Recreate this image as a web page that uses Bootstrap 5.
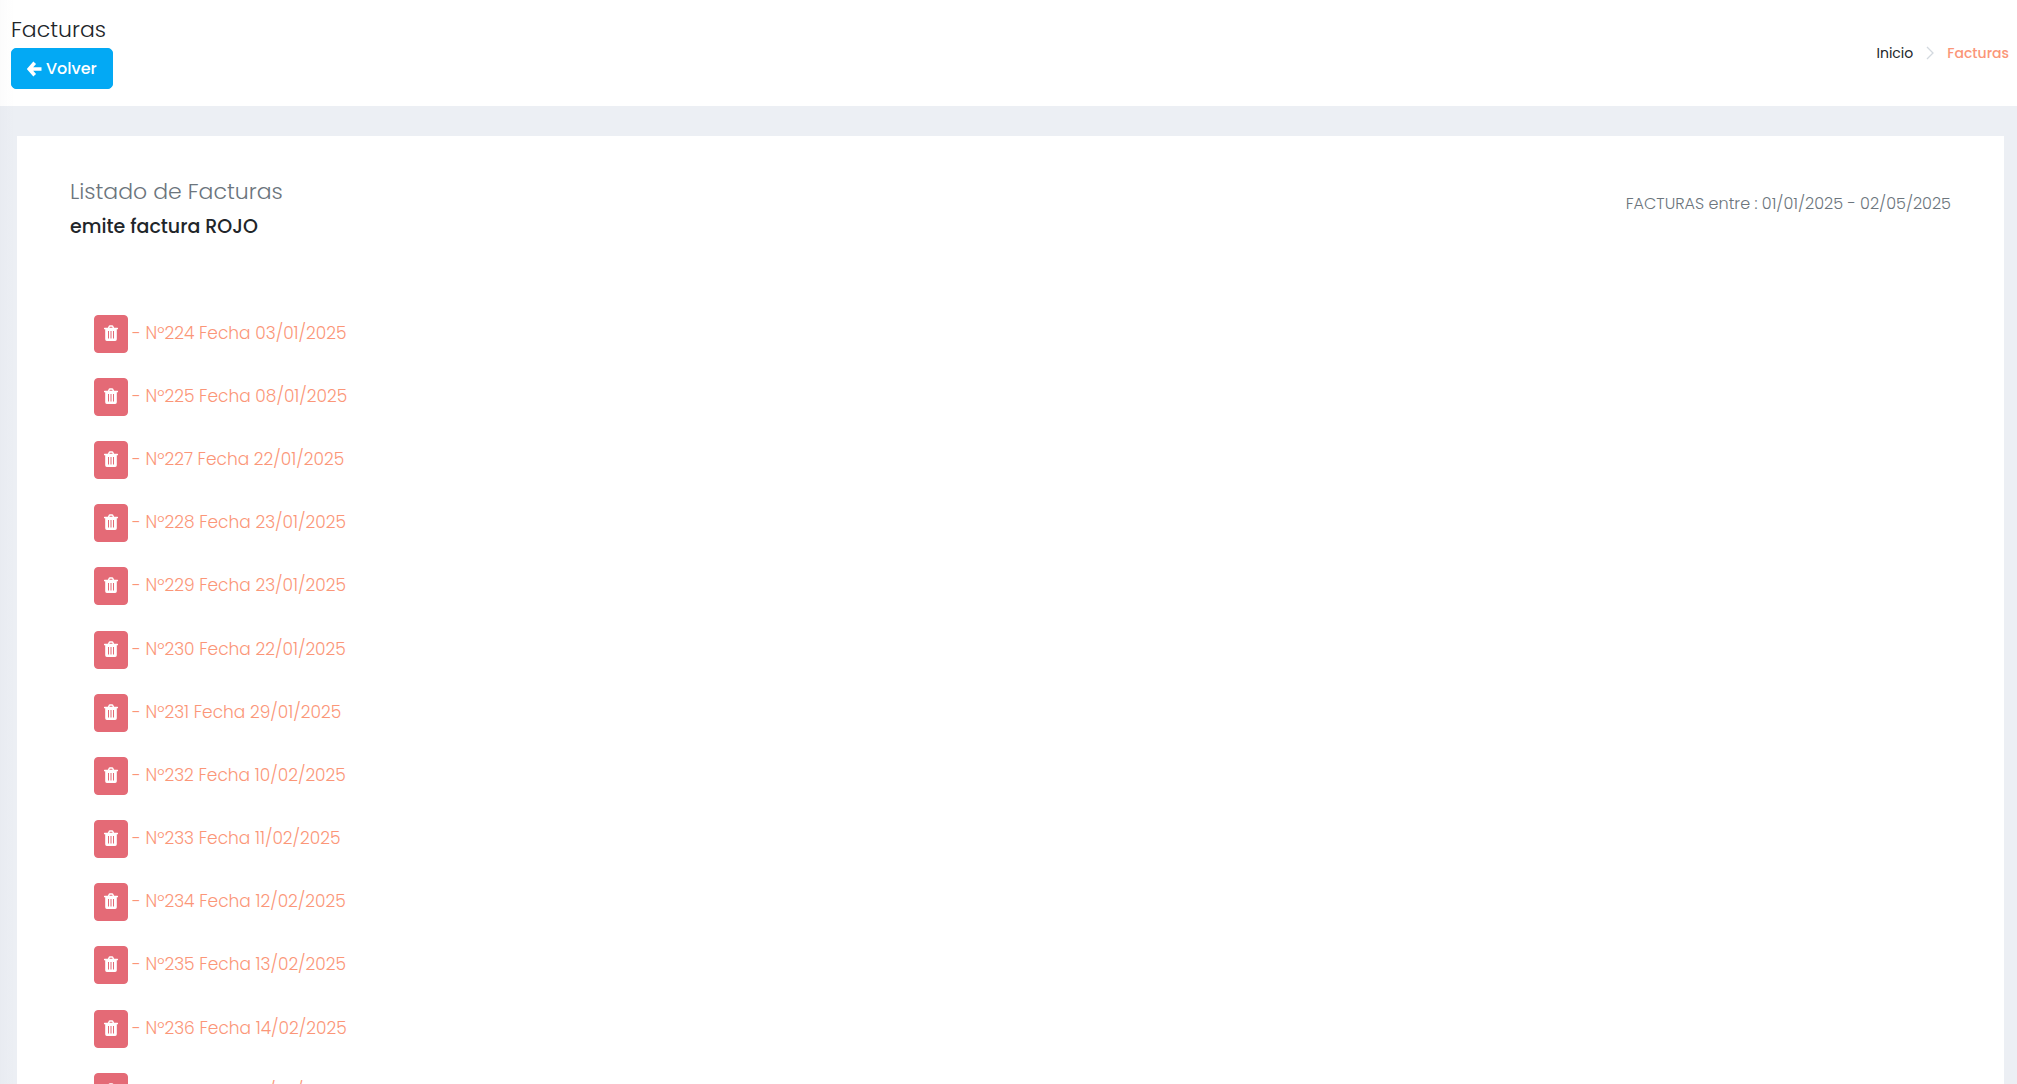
<!DOCTYPE html>
<html lang="es">
<head>
<meta charset="utf-8">
<meta name="viewport" content="width=device-width, initial-scale=1">
<title>Facturas</title>
<link href="https://cdn.jsdelivr.net/npm/bootstrap@5.3.0/dist/css/bootstrap.min.css" rel="stylesheet">
<style>
  html { overflow: hidden; }
  body { background: #eceff4; color: #212529; font-family: Poppins, Inter, sans-serif; font-weight: 300; font-size: 16px; line-height: 24px; height: 100vh; overflow: hidden; }
  .edge-shade { width: 14px; background: linear-gradient(90deg, rgba(60, 60, 90, .02), rgba(60, 60, 90, 0)); pointer-events: none; }
  .page-head { min-height: 106px; padding: 16px 8px 17px 11px; }
  .page-title { font-size: 22px; line-height: 28px; font-weight: 300; margin: 0 0 4px; }
  .btn-back { --bs-btn-bg: #03a9f4; --bs-btn-border-color: #03a9f4; --bs-btn-color: #fff; --bs-btn-hover-bg: #0398db; --bs-btn-hover-border-color: #0398db; --bs-btn-hover-color: #fff; --bs-btn-border-radius: 5px; height: 41px; padding: 0 15px; font-size: 16px; font-weight: 500; }
  .btn-back svg { margin-right: 4px; }
  .crumbs { --bs-breadcrumb-margin-bottom: 0; font-size: 14px; line-height: 20px; font-weight: 400; gap: 13px; }
  .crumbs a { color: #212529; text-decoration: none; }
  .crumbs .crumb-now { color: #fb9678; font-weight: 500; }
  .sheet { margin: 30px 13px 0 17px; padding: 38px 53px 24px; background: #fff; }
  .sheet-title { font-size: 22px; line-height: 36px; font-weight: 300; margin: 0; }
  .issuer { font-size: 19px; line-height: 34px; font-weight: 500; margin: 0; }
  .soft { color: #6c757d; }
  .range { margin: 18px 0 0; }
  .invoices { padding: 59px 24px 0; }
  .invoices li { padding: 12px 0 13px; gap: 4px; }
  .invoices li:nth-child(6n - 1) { padding-bottom: 14px; }
  .btn-trash { --bs-btn-bg: #e46a76; --bs-btn-border-color: #e46a76; --bs-btn-color: #fff; --bs-btn-hover-bg: #d75a67; --bs-btn-hover-border-color: #d75a67; --bs-btn-border-radius: 4px; width: 34px; height: 38px; padding: 0 0 2px; }
  .invoices a { color: #fb9678; text-decoration: none; font-size: 17px; padding-bottom: 2px; }
</style>
</head>
<body>
<svg class="d-none" aria-hidden="true">
  <symbol id="trash" viewBox="0 0 14 16">
    <path fill="none" stroke="currentColor" stroke-width="1.6" d="M4.5 3L5.2 1.5Q5.4 1 6 1H8Q8.6 1 8.8 1.5L9.5 3"/>
    <path fill="currentColor" fill-rule="evenodd" d="M.5 2.8H13.5Q14 2.8 14 3.3V4.3H12.8V14.2Q12.8 16 11.2 16H2.8Q1.2 16 1.2 14.2V4.3H0V3.3Q0 2.8 .5 2.8ZM4 6V13.4H5V6ZM6.5 6V13.4H7.5V6ZM9 6V13.4H10V6Z"/>
  </symbol>
</svg>
<div class="edge-shade position-fixed top-0 bottom-0 start-0"></div>
<header class="page-head bg-white d-flex justify-content-between align-items-center">
  <div>
    <h1 class="page-title">Facturas</h1>
    <button type="button" class="btn btn-back d-inline-flex align-items-center">
      <svg width="15" height="16" viewBox="0 0 15 16" aria-hidden="true"><path d="M7.7 1.7L2.2 8L7.7 14.3M2.5 8H14.5" fill="none" stroke="currentColor" stroke-width="3.6"/></svg>
      Volver
    </button>
  </div>
  <nav aria-label="Ruta">
    <ol class="crumbs breadcrumb align-items-center">
      <li><a href="#">Inicio</a></li>
      <li class="d-flex" aria-hidden="true"><svg width="8" height="14" viewBox="0 0 8 14"><path d="M1 1L7 7L1 13" fill="none" stroke="#d3d9df" stroke-width="1.3"/></svg></li>
      <li class="crumb-now" aria-current="page">Facturas</li>
    </ol>
  </nav>
</header>
<main class="sheet">
  <div class="d-flex justify-content-between align-items-start">
    <div>
      <h2 class="sheet-title soft">Listado de Facturas</h2>
      <p class="issuer">emite factura ROJO</p>
    </div>
    <p class="range soft">FACTURAS entre : 01/01/2025 - 02/05/2025</p>
  </div>
  <ul class="invoices list-unstyled mb-0" id="invoices"></ul>
</main>
<script>
  const invoices = [
    [224, '03/01/2025'], [225, '08/01/2025'], [227, '22/01/2025'], [228, '23/01/2025'],
    [229, '23/01/2025'], [230, '22/01/2025'], [231, '29/01/2025'], [232, '10/02/2025'],
    [233, '11/02/2025'], [234, '12/02/2025'], [235, '13/02/2025'], [236, '14/02/2025'],
    [237, '17/02/2025']
  ];
  document.getElementById('invoices').innerHTML = invoices.map(([n, date]) => `
    <li class="d-flex align-items-center">
      <button type="button" class="btn btn-trash d-inline-flex align-items-center justify-content-center" aria-label="Eliminar factura ${n}"><svg width="14" height="16" aria-hidden="true"><use href="#trash"/></svg></button>
      <a href="#">- Nº${n} Fecha ${date}</a>
    </li>`).join('');
</script>
<script src="https://cdn.jsdelivr.net/npm/bootstrap@5.3.0/dist/js/bootstrap.bundle.min.js"></script>
</body>
</html>
